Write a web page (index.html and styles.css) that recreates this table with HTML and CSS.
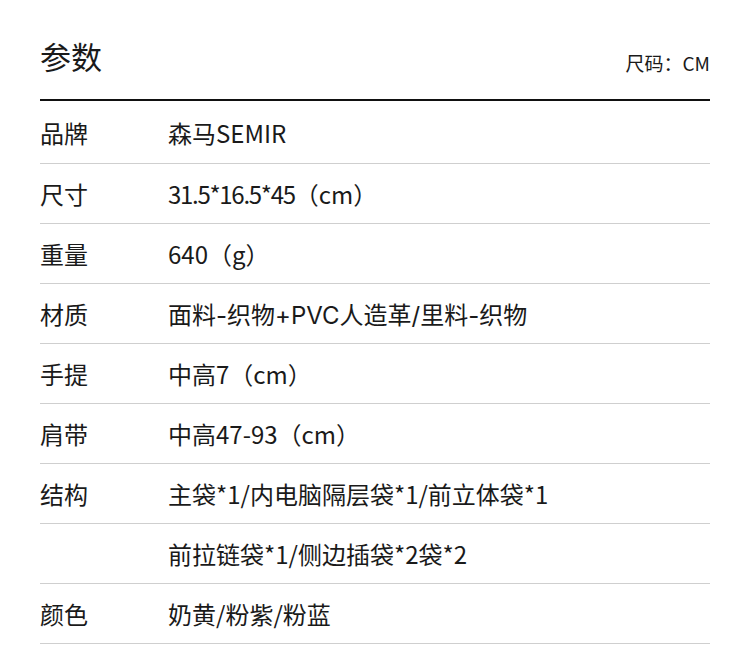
FILE: index.html
```html
<!DOCTYPE html>
<html lang="zh">
<head>
<meta charset="utf-8">
<link rel="stylesheet" href="styles.css">
</head>
<body>
<div class="page">
  <div class="head">
    <h1 class="title">参数</h1>
    <div class="unit">尺码：CM</div>
  </div>
  <div class="rows">
    <div class="row"><div class="k">品牌</div><div class="v">森马SEMIR</div></div>
    <div class="row"><div class="k">尺寸</div><div class="v"><span class="num">31.5*16.5*45</span>（cm）</div></div>
    <div class="row"><div class="k">重量</div><div class="v">640（g）</div></div>
    <div class="row"><div class="k">材质</div><div class="v geo">面料-织物+PVC人造革/里料-织物</div></div>
    <div class="row"><div class="k">手提</div><div class="v">中高7（cm）</div></div>
    <div class="row"><div class="k">肩带</div><div class="v">中高47-93（cm）</div></div>
    <div class="row"><div class="k">结构</div><div class="v">主袋*1/内电脑隔层袋*1/前立体袋*1</div></div>
    <div class="row"><div class="k"></div><div class="v">前拉链袋*1/侧边插袋*2袋*2</div></div>
    <div class="row"><div class="k">颜色</div><div class="v">奶黄/粉紫/粉蓝</div></div>
  </div>
</div>
</body>
</html>
```
FILE: styles.css
```css
html, body {
  margin: 0;
  padding: 0;
  background: #fff;
}
body {
  font-family: "Noto Sans CJK SC", sans-serif;
  color: #1a1a1a;
}
.page {
  padding: 0 40px;
}
.head {
  display: flex;
  justify-content: space-between;
  align-items: flex-end;
  height: 101px;
  border-bottom: 2px solid #111;
  box-sizing: border-box;
  padding-bottom: 20px;
}
.title {
  margin: 0;
  font-size: 31px;
  font-weight: 400;
  line-height: 40px;
  margin-bottom: 3px;
}
.unit {
  font-size: 19px;
  line-height: 24px;
  margin-bottom: 4px;
}
.row {
  display: flex;
  align-items: center;
  height: 60px;
  border-bottom: 1px solid #cfcfcf;
  box-sizing: border-box;
  font-size: 24px;
}
.row:first-child {
  height: 63px;
}
.k {
  width: 128px;
  flex: none;
}
.v {
  flex: 1;
}
.geo {
  font-family: Inter, "Noto Sans CJK SC", sans-serif;
}
.num {
  letter-spacing: -1.3px;
}
```
